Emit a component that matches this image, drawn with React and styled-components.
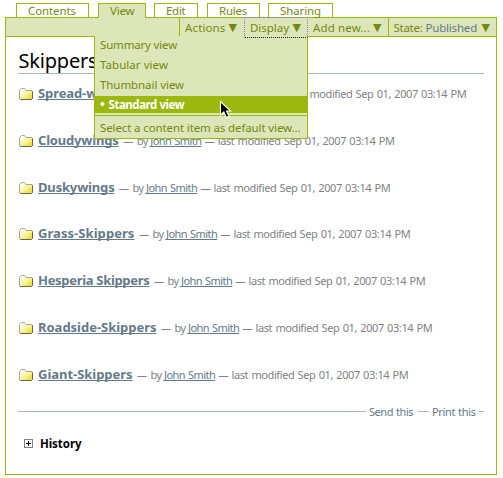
import React from "react";
import styled, { createGlobalStyle, css } from "styled-components";

const green = "#9cb70d";
const pale = "#dde6b8";
const olive = "#74890f";
const slate = "#64798a";
const grey = "#808285";
const rule = "#a7b6c5";

const GlobalStyle = createGlobalStyle`
  * { box-sizing: border-box; }
  body {
    margin: 0;
    background: #fff;
    font-family: "Noto Sans", "Open Sans", sans-serif;
    font-size: 11.5px;
    white-space: nowrap;
  }
  ul { list-style: none; margin: 0; padding: 0; }
`;

const Page = styled.div`
  width: 503px;
  height: 478px;
  padding: 3px 6px 0 5px;
  overflow: hidden;
`;

const Tabs = styled.nav`
  display: flex;
  height: 14px;
  padding-left: 11px;
`;

const Tab = styled.a`
  width: ${(p) => p.$width}px;
  height: 14px;
  margin-right: ${(p) => p.$gap}px;
  padding-left: ${(p) => p.$pad || 11}px;
  border: 1px solid ${green};
  border-bottom: 0;
  line-height: 13px;
  letter-spacing: ${(p) => p.$track}px;
  color: ${olive};
  ${(p) =>
    p.$active &&
    css`
      height: 15px;
      z-index: 1;
      background: ${pale};
    `}
`;

const Frame = styled.main`
  width: 492px;
  height: 458px;
  border: 1px solid ${green};
`;

const Toolbar = styled.div`
  position: relative;
  display: flex;
  justify-content: flex-end;
  height: 19px;
  background: ${pale};
  border-bottom: 1px solid ${green};
`;

const Action = styled.div`
  display: flex;
  width: ${(p) => p.$width}px;
  height: 18px;
  padding-left: ${(p) => p.$pad}px;
  border-left: ${(p) => (p.$divider ? `1px solid ${green}` : "0")};
  line-height: 19px;
  color: ${olive};
  ${(p) =>
    p.$focused &&
    css`
      z-index: 3;
      height: 21px;
      margin-top: -1px;
      border: 1px dotted #8c7fd0;
      border-bottom-color: #222;
    `}
`;

const Label = styled.span`
  width: ${(p) => p.$width}px;
  letter-spacing: ${(p) => p.$track}px;
  color: ${(p) => (p.$muted ? slate : "inherit")};
`;

const Arrow = styled.span`
  font: 11px/19px "DejaVu Sans", sans-serif;
`;

const Menu = styled.ul`
  position: absolute;
  z-index: 2;
  top: 18px;
  left: 88px;
  width: 214px;
  height: 103px;
  background: ${pale};
  border: 1px solid ${green};
  border-top: 0;
`;

const MenuItem = styled.li`
  height: 17px;
  margin-bottom: 3px;
  padding-left: 5px;
  line-height: 17px;
  letter-spacing: ${(p) => p.$track}px;
  color: ${olive};
  ${(p) =>
    p.$selected &&
    css`
      margin-bottom: 2px;
      background: ${green};
      color: #fff;
      font-weight: 700;
      line-height: 18px;
    `}
`;

const Bullet = styled.span`
  display: inline-block;
  width: 8.5px;
  font-size: 13px;
  line-height: 10px;
`;

const MenuRule = styled.li`
  height: 1px;
  margin-bottom: 3px;
  background: ${green};
`;

const Cursor = styled.svg`
  position: absolute;
  z-index: 4;
  top: 82px;
  left: 213px;
`;

const Body = styled.section`
  padding: 11px 12px 0 12px;
`;

const Heading = styled.h1`
  height: 26px;
  margin: 0 0 10px;
  padding-left: 0.5px;
  border-bottom: 1px solid ${rule};
  font-size: 20px;
  font-weight: 400;
  line-height: 25px;
  letter-spacing: -0.2px;
  color: #000;
`;

const Listing = styled.div`
  height: 318px;
`;

const Entry = styled.article`
  display: flex;
  height: 46.83px;
`;

const FolderSvg = styled.svg`
  flex: none;
  margin: 4px 5px 0 1px;
`;

const Line = styled.div`
  display: flex;
  align-items: baseline;
  height: 18px;
  font-size: 11px;
  line-height: 18px;
  color: ${grey};
`;

const Link = styled.a`
  color: ${slate};
  text-decoration: underline;
  text-decoration-skip-ink: none;
  text-decoration-thickness: 1px;
  text-underline-offset: 1px;
`;

const EntryTitle = styled(Link)`
  width: ${(p) => p.$width}px;
  font-size: 13px;
  font-weight: 700;
  letter-spacing: ${(p) => p.$track}px;
`;

const Dash = styled.span`
  width: ${(p) => p.$width}px;
  padding-left: ${(p) => p.$pad}px;
  font-size: 10px;
`;

const By = styled.span`
  width: 13.5px;
  letter-spacing: -0.6px;
`;

const Author = styled(Link)`
  width: 51px;
  letter-spacing: -0.55px;
  word-spacing: 0.7px;
`;

const Modified = styled.span`
  letter-spacing: -0.4px;
  word-spacing: 0.8px;
`;

const DocActions = styled.div`
  display: flex;
  align-items: center;
  height: 19px;
  font-size: 11px;
  line-height: 19px;
  color: ${slate};
`;

const Stroke = styled.span`
  flex: ${(p) => (p.$width ? `0 0 ${p.$width}px` : "1")};
  height: 1px;
  background: ${rule};
`;

const DocAction = styled.a`
  width: ${(p) => p.$width}px;
  padding-left: 3px;
  letter-spacing: ${(p) => p.$track}px;
  word-spacing: 0.6px;
`;

const History = styled.div`
  display: flex;
  align-items: center;
  height: 17px;
  margin: 14px 0 0 6px;
  gap: 7px;
  font-weight: 700;
  color: #000;
  letter-spacing: -0.06px;
`;

const FolderIcon = () => (
  <FolderSvg width="14" height="12" viewBox="0 0 14 12">
    <defs>
      <linearGradient id="folder" x1="0" y1="0" x2="1" y2="1">
        <stop offset="0.2" stopColor="#fffff4" />
        <stop offset="0.6" stopColor="#f6f180" />
        <stop offset="1" stopColor="#dcd52c" />
      </linearGradient>
    </defs>
    <path d="M.5 10.5V2.5L2.5.5H5.5L7 2.5H12.5L13.5 3.5V10.5L12.5 11.5H1.5Z" fill="url(#folder)" />
    <path d="M.5 10.5V2.5L2.5.5H5.5L7 2.5H12.5" fill="none" stroke="#aaa78b" />
    <path d="M12.5 2.5L13.5 3.5V10.5L12.5 11.5H1.5L.5 10.5" fill="none" stroke="#65644c" />
  </FolderSvg>
);

const entries = [
  ["Spread-winged Skippers", 152.5, -0.1],
  ["Cloudywings", 80.7, -0.18],
  ["Duskywings", 76.5, -0.17],
  ["Grass-Skippers", 96.5, 0.06],
  ["Hesperia Skippers", 111.5, -0.31],
  ["Roadside-Skippers", 118.5, -0.02],
  ["Giant-Skippers", 94.5, -0.03],
];

export default function App() {
  return (
    <Page>
      <GlobalStyle />
      <Tabs>
        <Tab $width={73} $gap={9} $track={-0.09}>Contents</Tab>
        <Tab $width={48} $gap={8} $track={-0.17} $active>View</Tab>
        <Tab $width={44} $gap={9} $track={-0.27}>Edit</Tab>
        <Tab $width={53} $gap={8} $track={-0.24}>Rules</Tab>
        <Tab $width={65} $gap={0} $track={-0.11}>Sharing</Tab>
      </Tabs>
      <Frame>
        <Toolbar>
          <Action $width={65} $pad={5} $divider>
            <Label $width={43.5} $track={0.13}>Actions</Label>
            <Arrow>▼</Arrow>
          </Action>
          <Action $width={64} $pad={5} $focused>
            <Label $width={42.5} $track={-0.03}>Display</Label>
            <Arrow>▼</Arrow>
          </Action>
          <Action $width={80} $pad={5}>
            <Label $width={60} $track={0.13}>Add new...</Label>
            <Arrow>▼</Arrow>
          </Action>
          <Action $width={108} $pad={4.5} $divider>
            <Label $width={32} $track={-0.27}>State:</Label>
            <Label $width={56} $track={-0.19} $muted>Published</Label>
            <Arrow>▼</Arrow>
          </Action>
          <Menu>
            <MenuItem $track={-0.17}>Summary view</MenuItem>
            <MenuItem $track={0.05}>Tabular view</MenuItem>
            <MenuItem $track={-0.07}>Thumbnail view</MenuItem>
            <MenuItem $track={-0.46} $selected>
              <Bullet>•</Bullet>Standard view
            </MenuItem>
            <MenuRule />
            <MenuItem $track={-0.12}>Select a content item as default view...</MenuItem>
          </Menu>
          <Cursor width="14" height="20" viewBox="0 0 14 20">
            <path
              d="M1.5 1.5V15L4.8 12L7.2 17.5L10 16.2L7.6 11H11.6Z"
              fill="#000"
              stroke="#fff"
              strokeWidth="1.1"
            />
          </Cursor>
        </Toolbar>
        <Body>
          <Heading>Skippers</Heading>
          <Listing>
            {entries.map(([name, width, track]) => (
              <Entry key={name}>
                <FolderIcon />
                <Line>
                  <EntryTitle $width={width} $track={track}>{name}</EntryTitle>
                  <Dash $width={18} $pad={4.5}>—</Dash>
                  <By>by</By>
                  <Author>John Smith</Author>
                  <Dash $width={16.5} $pad={3.5}>—</Dash>
                  <Modified>last modified Sep 01, 2007 03:14 PM</Modified>
                </Line>
              </Entry>
            ))}
          </Listing>
          <DocActions>
            <Stroke />
            <DocAction $width={52} $track={-0.45}>Send this</DocAction>
            <Stroke $width={11} />
            <DocAction $width={50} $track={-0.36}>Print this</DocAction>
            <Stroke $width={5} />
          </DocActions>
          <History>
            <svg width="9" height="9" viewBox="0 0 9 9">
              <rect x=".5" y=".5" width="8" height="8" fill="#fff" stroke="#808080" />
              <path d="M2 4.5H7M4.5 2V7" stroke="#000" />
            </svg>
            <span>History</span>
          </History>
        </Body>
      </Frame>
    </Page>
  );
}
